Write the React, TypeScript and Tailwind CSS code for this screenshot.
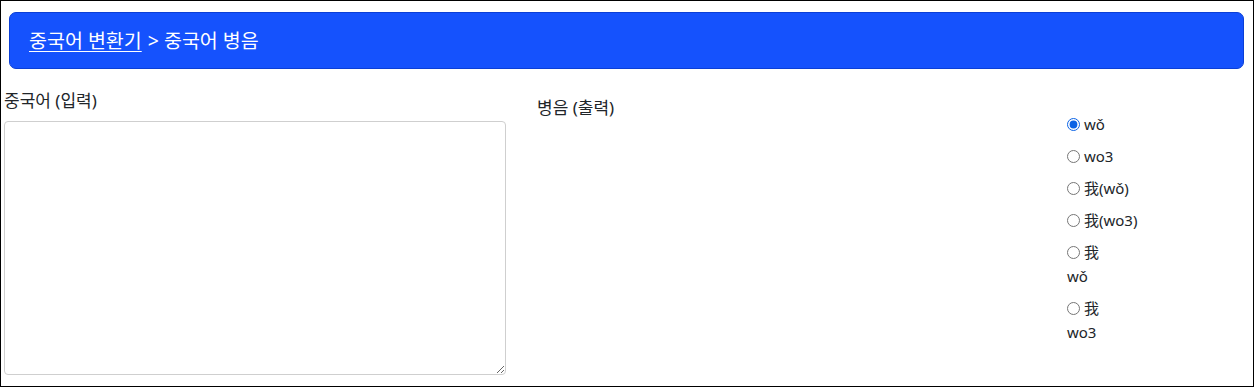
import React, { useState } from 'react';

const FORMATS: { id: string; lines: string[] }[] = [
  { id: 'mark', lines: ['wǒ'] },
  { id: 'num', lines: ['wo3'] },
  { id: 'hanzi-mark', lines: ['我(wǒ)'] },
  { id: 'hanzi-num', lines: ['我(wo3)'] },
  { id: 'ruby-mark', lines: ['我', 'wǒ'] },
  { id: 'ruby-num', lines: ['我', 'wo3'] },
];

const App: React.FC = () => {
  const [input, setInput] = useState<string>('');
  const [format, setFormat] = useState<string>('mark');

  return (
    <div
      className="w-[1254px] h-[387px] border border-black bg-white text-[#212529] overflow-hidden"
      style={{ fontFamily: '"Noto Sans", "Noto Sans CJK KR", sans-serif' }}
    >
      <header className="mt-[11px] ml-[8px] mr-[9px] h-[57px] rounded-[7px] border border-[#0b3fd6] bg-[#1552fd] flex items-center pl-[19px] text-[19.5px] text-white">
        <a href="#" className="underline underline-offset-[3px] decoration-1">
          중국어 변환기
        </a>
        <span className="ml-[6px]">&gt; 중국어 병음</span>
      </header>

      <div className="flex mt-[20px]">
        <section className="ml-[3px] w-[502px] flex flex-col">
          <label className="text-[17px] leading-[24px] mb-[8px]">중국어 (입력)</label>
          <textarea
            value={input}
            onChange={(e) => setInput(e.target.value)}
            className="w-[502px] h-[254px] border border-[#cfcfcf] rounded-[4px] outline-none p-2 text-[16px]"
          />
        </section>

        <section className="ml-[31px] w-[530px] pt-[7px]">
          <label className="text-[17px] leading-[24px]">병음 (출력)</label>
        </section>

        <section className="pt-[22.6px] flex flex-col gap-[8px]">
          {FORMATS.map((f) => (
            <label key={f.id} className="block text-[15px] leading-[24px]">
              <input
                type="radio"
                name="format"
                checked={format === f.id}
                onChange={() => setFormat(f.id)}
                className="m-0 mr-[4px] w-[13px] h-[13px] align-[-1px] accent-[#0b63e5]"
              />
              {f.lines[0]}
              {f.lines[1] && (
                <>
                  <br />
                  {f.lines[1]}
                </>
              )}
            </label>
          ))}
        </section>
      </div>
    </div>
  );
};

export default App;
